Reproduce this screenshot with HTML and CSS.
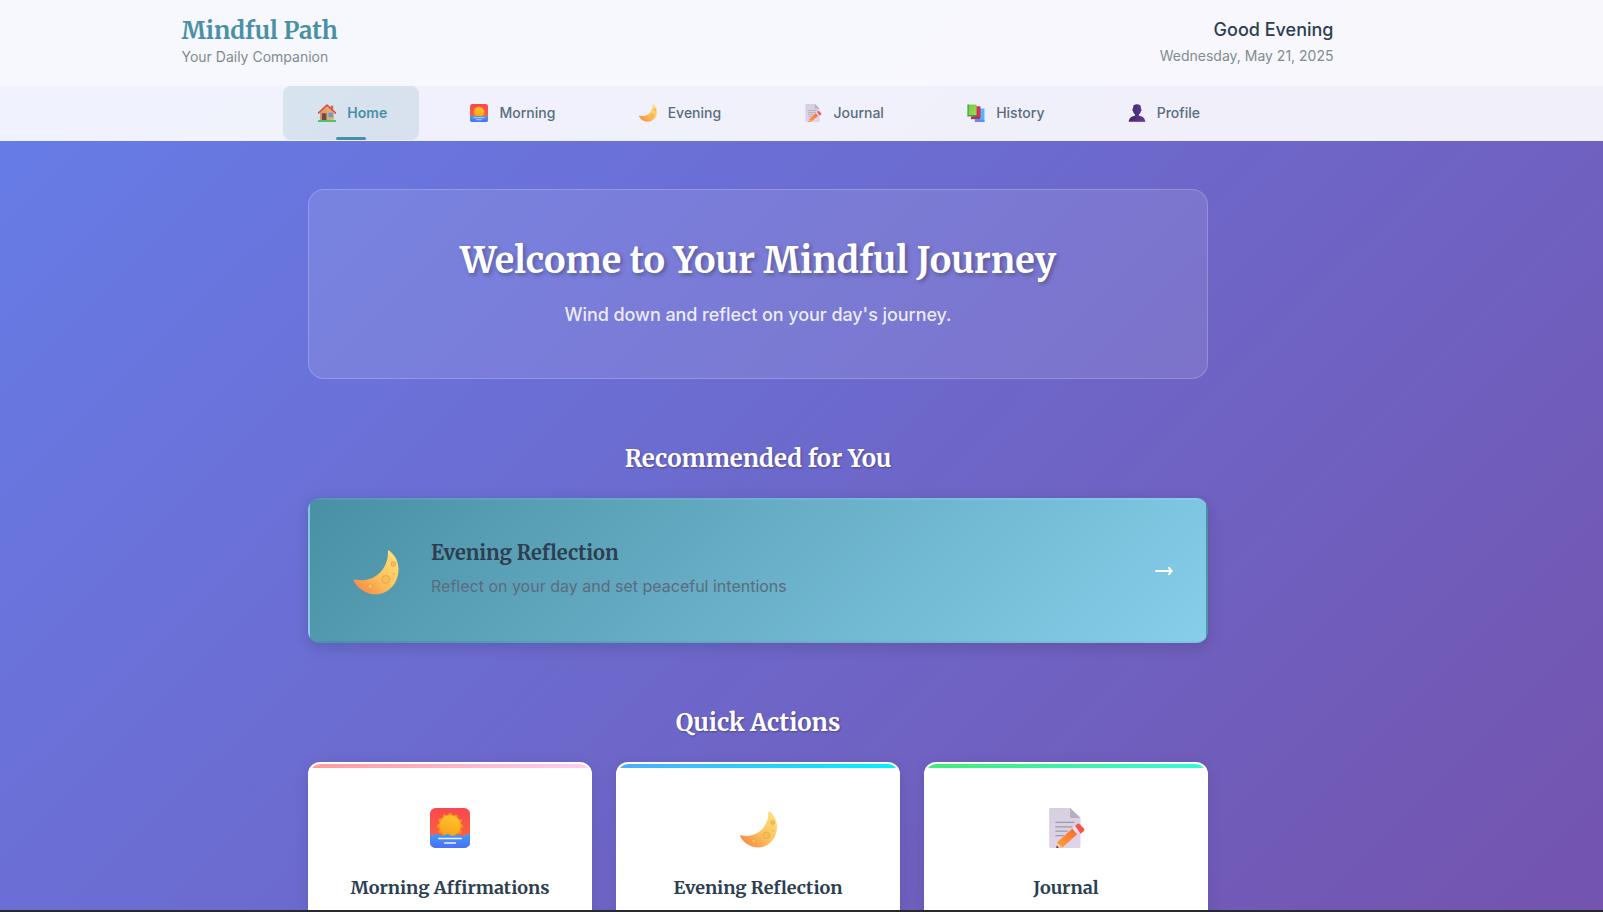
FILE: index.html
```html
<!DOCTYPE html>
<html lang="en">
<head>
<meta charset="utf-8">
<title>Mindful Path</title>
<link rel="stylesheet" href="styles.css">
</head>
<body>
<svg class="sprite" aria-hidden="true">
  <defs>
    <linearGradient id="sky" x1="0" y1="0" x2="0" y2="1"><stop offset="0" stop-color="#f8484f"/><stop offset="1" stop-color="#fb6a3c"/></linearGradient>
    <linearGradient id="sea" x1="0" y1="0" x2="0" y2="1"><stop offset="0" stop-color="#3f9df5"/><stop offset="1" stop-color="#4a70f5"/></linearGradient>
    <linearGradient id="sun" x1="0.7" y1="0" x2="0.3" y2="1"><stop offset="0" stop-color="#ffc52a"/><stop offset="1" stop-color="#f9a01c"/></linearGradient>
    <linearGradient id="lune" x1="1" y1="0.1" x2="0.1" y2="1"><stop offset="0" stop-color="#ffe07c"/><stop offset="0.5" stop-color="#fdc35e"/><stop offset="1" stop-color="#f98442"/></linearGradient>
    <linearGradient id="sheet" x1="0" y1="0" x2="0" y2="1"><stop offset="0" stop-color="#d5d0df"/><stop offset="1" stop-color="#e0d3ea"/></linearGradient>
    <linearGradient id="wood" x1="0" y1="1" x2="1" y2="0"><stop offset="0" stop-color="#ffa23e"/><stop offset="1" stop-color="#f8682f"/></linearGradient>
    <linearGradient id="person" x1="0" y1="0" x2="1" y2="0"><stop offset="0" stop-color="#3b2468"/><stop offset="1" stop-color="#60409a"/></linearGradient>
    <linearGradient id="wall" x1="0" y1="0" x2="1" y2="0"><stop offset="0" stop-color="#d4976b"/><stop offset="1" stop-color="#edb57c"/></linearGradient>
    <linearGradient id="green" x1="0" y1="0" x2="1" y2="1"><stop offset="0" stop-color="#78c940"/><stop offset="1" stop-color="#9bdb5c"/></linearGradient>
    <clipPath id="tile"><rect width="32" height="32" rx="4.5"/></clipPath>
  </defs>
  <symbol id="sunrise" viewBox="0 0 32 32">
    <g clip-path="url(#tile)">
      <rect width="32" height="32" fill="url(#sky)"/>
      <circle cx="16" cy="14.500" r="9" fill="#f9921b"/>
      <circle cx="16" cy="14.500" r="9" fill="none" stroke="#f9921b" stroke-width="3.200" stroke-dasharray="0 4.712" stroke-linecap="round"/>
      <circle cx="16" cy="14" r="8.400" fill="url(#sun)"/>
      <path d="M0 21q2 1.600 4 .2t4 .2q2 1.500 4 .1t4 .1q2 1.500 4 .1t4 .1q2 1.500 4 0t4-.8v11H0z" fill="url(#sea)"/>
      <path d="M7 24.400h18M11.700 28h8.600" stroke="#f2f1ff" stroke-width="1.200" stroke-linecap="round"/>
    </g>
  </symbol>
  <symbol id="moon" viewBox="0 0 32 32">
    <path d="M25.200.3C29.500 3.500 32 8 32 13.700 32 23.500 25 31.500 15.800 31.500 9.300 31.500 3.500 28 .2 22c-.4-.8.100-1.200.9-1 5 1.200 9.900.3 14.200-2.200C21.200 15.200 24.800 8.500 24.500 1c0-.8.200-1.100.7-.7z" fill="url(#lune)"/>
    <g fill="#f8bc58" stroke="#e0983e" stroke-width=".5"><circle cx="23" cy="21" r="2.800"/><circle cx="12" cy="25.800" r="1.800"/><circle cx="28.300" cy="10" r="1.600"/></g>
    <circle cx="28.800" cy="17" r=".7" fill="#f2ad47"/><circle cx="17.500" cy="28" r=".6" fill="#f2a144"/>
  </symbol>
  <symbol id="memo" viewBox="0 0 32 32">
    <path d="M3.300 0h16l8.300 8v22.500a1.500 1.500 0 0 1-1.500 1.500H4a1.500 1.500 0 0 1-1.500-1.500V1a1 1 0 0 1 .8-1z" fill="url(#sheet)"/>
    <path d="M19.300 0l8.300 8h-7a1.300 1.300 0 0 1-1.300-1.300z" fill="#b6aec0"/>
    <path d="M7.500 11.500h15.300M7.500 15h13.500M7.500 18.500h10M7.500 22h7" stroke="#9c99a5" stroke-width="1"/>
    <path d="M8.300 32l1-5 12.500-11.300 4 4.400L13.300 31.300z" fill="url(#wood)"/>
    <path d="M21 16.400l2.500-2.200 4 4.400-2.600 2.300z" fill="#e9e1ee"/>
    <path d="M23.300 14.300l1.700-1.600q1-.7 1.900.1l3.500 3.600q.7 1-.1 1.900l-2.600 2.300z" fill="#f9524c"/>
    <path d="M8.300 32l.8-4 3.800 3.400z" fill="#ffd0a0"/><path d="M8.300 32l.3-2 1.700 1.600z" fill="#3b2b42"/>
  </symbol>
  <symbol id="house" viewBox="0 0 32 32">
    <path d="M22.500 3h4.500v10h-4.500z" fill="#c96a4c"/>
    <path d="M3.500 15L16 3l12.500 12v14h-25z" fill="url(#wall)"/>
    <path d="M1 16L16 2l15 14" fill="none" stroke="#df5040" stroke-width="3" stroke-linecap="round" stroke-linejoin="round"/>
    <path d="M7 16.500h8V29H7z" fill="#754740"/>
    <rect x="19" y="15.500" width="7.500" height="8" rx="1" fill="#43a9e8" stroke="#cc9170" stroke-width=".8"/>
    <rect y="28.500" width="32" height="3.500" rx="1" fill="#49c467"/>
  </symbol>
  <symbol id="books" viewBox="0 0 32 32">
    <path d="M15 8h16v22a2 2 0 0 1-2 2H14z" fill="#50b5fb"/><path d="M14 28h17v4H14z" fill="#628bf2"/>
    <path d="M8 4h16v21H8z" fill="#d5304f"/><path d="M7 23h16v4H7z" fill="#a63467"/>
    <path d="M1 1h16v19H1z" fill="url(#green)"/><path d="M1 19.500h16V22H1z" fill="#519543"/><path d="M1 1h2v21H1z" fill="#42a241"/>
  </symbol>
  <symbol id="person-icon" viewBox="0 0 32 32">
    <path d="M10 2q6-3 12 0l1.500 7q1.500 2-.4 4-1 4-3.600 5.500V21q8.500.5 11 8.500.6 2.500-1 2.500h-27q-1.600 0-1-2.500Q4 21.500 12.500 21v-2.500Q9.900 17 8.900 13 7 11 8.500 9z" fill="url(#person)"/>
    <path d="M2 30h28v2H2z" fill="#7b5595"/>
  </symbol>
</svg>

<header class="site-header">
  <div class="header-inner">
    <div class="brand">
      <h1 class="brand-name">Mindful Path</h1>
      <p class="brand-tagline">Your Daily Companion</p>
    </div>
    <div class="greeting">
      <p class="greeting-text">Good Evening</p>
      <p class="greeting-date">Wednesday, May 21, 2025</p>
    </div>
  </div>
</header>

<nav class="site-nav">
  <a class="nav-item active"><span class="nav-icon"><svg><use href="#house"/></svg></span>Home</a>
  <a class="nav-item"><span class="nav-icon"><svg><use href="#sunrise"/></svg></span>Morning</a>
  <a class="nav-item"><span class="nav-icon"><svg><use href="#moon"/></svg></span>Evening</a>
  <a class="nav-item"><span class="nav-icon"><svg><use href="#memo"/></svg></span>Journal</a>
  <a class="nav-item"><span class="nav-icon"><svg><use href="#books"/></svg></span>History</a>
  <a class="nav-item"><span class="nav-icon"><svg><use href="#person-icon"/></svg></span>Profile</a>
</nav>

<main class="content">
  <section class="hero">
    <h2 class="hero-title">Welcome to Your Mindful Journey</h2>
    <p class="hero-text">Wind down and reflect on your day's journey.</p>
  </section>

  <section class="recommended">
    <h3 class="section-title">Recommended for You</h3>
    <a class="feature">
      <svg class="feature-icon"><use href="#moon"/></svg>
      <div class="feature-body">
        <h4 class="feature-title">Evening Reflection</h4>
        <p class="feature-text">Reflect on your day and set peaceful intentions</p>
      </div>
      <svg class="feature-arrow" viewBox="0 0 18 10"><path d="M.3 5h16M13.300 1.200L16.800 5l-3.500 3.800" fill="none" stroke="#fff" stroke-width="1.900"/></svg>
    </a>
  </section>

  <section class="quick">
    <h3 class="section-title">Quick Actions</h3>
    <div class="cards">
      <a class="card card-morning"><span class="card-icon"><svg><use href="#sunrise"/></svg></span><h4 class="card-title">Morning Affirmations</h4></a>
      <a class="card card-evening"><span class="card-icon"><svg class="moon"><use href="#moon"/></svg></span><h4 class="card-title">Evening Reflection</h4></a>
      <a class="card card-journal"><span class="card-icon"><svg><use href="#memo"/></svg></span><h4 class="card-title">Journal</h4></a>
    </div>
  </section>
</main>
</body>
</html>
```
FILE: styles.css
```css
* { box-sizing: border-box; margin: 0; padding: 0; }
body {
  height: 912px;
  overflow: hidden;
  display: flex;
  flex-direction: column;
  font-family: "Inter", sans-serif;
  background: linear-gradient(135deg, #667eea 0%, #764ba2 100%) 0 0 / 100% 1420px no-repeat;
  border-bottom: 2px solid #262a2c;
}
.sprite { position: absolute; width: 0; height: 0; }
.brand-name, .hero-title, .section-title, .feature-title, .card-title {
  font-family: "Merriweather", "DejaVu Serif Condensed", "DejaVu Serif", serif;
  font-weight: 700;
  white-space: nowrap;
}
.site-header {
  flex: none;
  height: 86px;
  padding-right: 88px;
  background: rgba(255, 255, 255, .95);
}
.header-inner {
  width: 1200px;
  margin: 0 auto;
  padding: 16px 24px;
  display: flex;
  justify-content: space-between;
}
.brand-name { font-size: 24px; line-height: 29px; color: #4a90a4; }
.brand-tagline { font-size: 14px; line-height: 23px; color: #7f8c8d; }
.greeting { text-align: right; }
.greeting-text { font-size: 18px; line-height: 28px; font-weight: 500; color: #2c3e50; }
.greeting-date { font-size: 14px; line-height: 23px; color: #7f8c8d; }
.site-nav {
  flex: none;
  height: 55px;
  padding-right: 88px;
  display: flex;
  justify-content: center;
  gap: 16px;
  background: rgba(255, 255, 255, .9);
}
.nav-item {
  position: relative;
  display: flex;
  align-items: center;
  gap: 8px;
  height: 54px;
  padding: 0 32px 1px;
  border-radius: 8px;
  font-size: 14px;
  font-weight: 500;
  color: #5a6c7d;
}
.nav-item.active { background: rgba(74, 144, 164, .15); color: #4a90a4; font-weight: 600; }
.nav-item.active::after {
  content: "";
  position: absolute;
  left: 50%;
  bottom: 0;
  width: 30px;
  height: 3px;
  margin-left: -15px;
  border-radius: 2px;
  background: #4a90a4;
}
.nav-icon { width: 24.300px; display: flex; justify-content: center; }
.nav-icon svg { width: 18px; height: 18px; }
.content {
  flex: none;
  width: 900px;
  height: 769px;
  overflow-x: visible;
  overflow-y: clip;
  margin-left: 308px;
  padding-top: 48px;
}
.hero {
  height: 190px;
  padding-top: 48px;
  text-align: center;
  color: #fff;
  border: 1px solid rgba(255, 255, 255, .2);
  border-radius: 16px;
  background: rgba(255, 255, 255, .1);
}
.hero-title { font-size: 36px; line-height: 46px; text-shadow: 2px 2px 4px rgba(0, 0, 0, .3); }
.hero-text { margin-top: 17px; font-size: 18px; line-height: 28px; font-weight: 500; letter-spacing: -.07px; color: rgba(255, 255, 255, .87); }
.section-title {
  padding-top: 1px;
  font-size: 24px;
  line-height: 32px;
  text-align: center;
  color: #fff;
  text-shadow: 1px 1px 2px rgba(0, 0, 0, .3);
}
.recommended { padding-top: 63px; }
.feature {
  display: flex;
  align-items: center;
  height: 145px;
  margin-top: 23px;
  padding: 0 33px 0 43px;
  border: 2px solid transparent;
  border-radius: 12px;
  background: linear-gradient(135deg, #4a90a4, #87ceeb);
  box-shadow: 0 4px 16px rgba(0, 0, 0, .14);
}
.feature-icon { width: 46px; height: 45px; margin: 3px 32px 0 0; }
.feature-body { flex: 1; padding-bottom: 4px; }
.feature-title { font-size: 20px; line-height: 28px; color: #2c3e50; }
.feature-text { margin-top: 7px; font-size: 16px; line-height: 24px; color: #5a6c7d; }
.feature-arrow { width: 18px; height: 10px; }
.quick { padding-top: 63px; }
.cards { display: grid; grid-template-columns: repeat(3, 1fr); gap: 24px; margin-top: 23px; }
.card {
  display: flex;
  flex-direction: column;
  align-items: center;
  height: 230px;
  border: 2px solid #fff;
  border-radius: 12px;
  overflow: hidden;
  background: #fff;
  box-shadow: 0 4px 16px rgba(0, 0, 0, .1);
}
.card::before { content: ""; width: 100%; height: 4px; flex: none; }
.card-morning::before { background: linear-gradient(90deg, #ff9a9e, #fecfef); }
.card-evening::before { background: linear-gradient(90deg, #4facfe, #00f2fe); }
.card-journal::before { background: linear-gradient(90deg, #43e97b, #38f9d7); }
.card-icon { display: flex; align-items: flex-end; justify-content: center; height: 40px; margin-top: 40px; flex: none; }
.card-icon svg { width: 40px; height: 40px; }
.card-icon .moon { width: 37px; height: 37px; }
.card-title { margin-top: 26px; font-size: 18px; line-height: 28px; color: #2c3e50; }
```
